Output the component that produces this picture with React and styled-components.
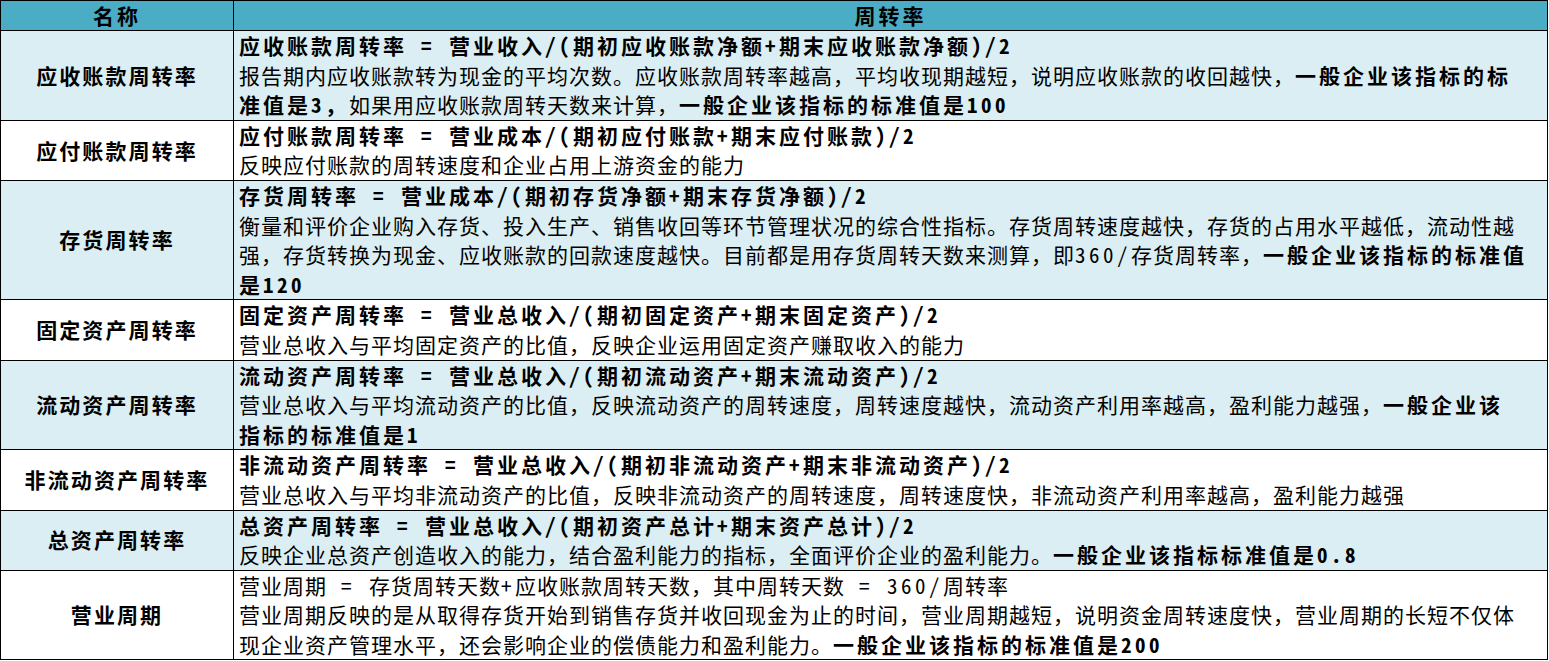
import React from 'react';
import styled, { createGlobalStyle } from 'styled-components';

const GlobalStyle = createGlobalStyle`
  html, body { margin: 0; padding: 0; background: #ffffff; }
  body { font-family: "Noto Sans CJK SC", "Noto Sans", sans-serif; color: #000; }
`;

const Table = styled.table`
  width: 1548px;
  border-collapse: collapse;
  table-layout: fixed;
  font-family: "Noto Sans CJK SC", sans-serif;
  font-size: 21px;
  color: #000;
`;

const HeadCell = styled.th`
  background: #4bacc6;
  border: 1px solid #000;
  height: 29px;
  padding: 0;
  line-height: 29px;
  font-weight: 700;
  letter-spacing: 3px;
  text-align: center;
  width: ${(p) => p.$width || 'auto'};
`;

const Row = styled.tr`
  background: ${(p) => (p.$tint ? '#daeef3' : '#ffffff')};
`;

const NameCell = styled.td`
  border: 1px solid #000;
  padding: 0;
  text-align: center;
  vertical-align: middle;
  font-weight: 700;
  letter-spacing: 2.1px;
  line-height: 29.6px;
`;

const BodyCell = styled.td`
  border: 1px solid #000;
  padding: 0 5px;
  vertical-align: middle;
`;

const Line = styled.div`
  white-space: nowrap;
  overflow: hidden;
  line-height: 29.6px;
  height: 29.6px;
`;

const Seg = styled.span`
  font-weight: ${(p) => (p.$bold ? 700 : 400)};
  letter-spacing: ${(p) => (p.$bold ? '3px' : '1px')};
`;

const Latin = styled.span`
  font-family: "Noto Sans Mono CJK SC", "Noto Sans CJK SC", sans-serif;
  letter-spacing: 3.5px;
`;

const rows = [
  {
    name: '应收账款周转率',
    tint: true,
    lines: [
      [['应收账款周转率 = 营业收入/(期初应收账款净额+期末应收账款净额)/2', true]],
      [
        ['报告期内应收账款转为现金的平均次数。应收账款周转率越高，平均收现期越短，说明应收账款的收回越快，', false],
        ['一般企业该指标的标', true],
      ],
      [
        ['准值是3，', true],
        ['如果用应收账款周转天数来计算，', false],
        ['一般企业该指标的标准值是100', true],
      ],
    ],
  },
  {
    name: '应付账款周转率',
    tint: false,
    lines: [
      [['应付账款周转率 = 营业成本/(期初应付账款+期末应付账款)/2', true]],
      [['反映应付账款的周转速度和企业占用上游资金的能力', false]],
    ],
  },
  {
    name: '存货周转率',
    tint: true,
    lines: [
      [['存货周转率 = 营业成本/(期初存货净额+期末存货净额)/2', true]],
      [['衡量和评价企业购入存货、投入生产、销售收回等环节管理状况的综合性指标。存货周转速度越快，存货的占用水平越低，流动性越', false]],
      [
        ['强，存货转换为现金、应收账款的回款速度越快。目前都是用存货周转天数来测算，即360/存货周转率，', false],
        ['一般企业该指标的标准值', true],
      ],
      [['是120', true]],
    ],
  },
  {
    name: '固定资产周转率',
    tint: false,
    lines: [
      [['固定资产周转率 = 营业总收入/(期初固定资产+期末固定资产)/2', true]],
      [['营业总收入与平均固定资产的比值，反映企业运用固定资产赚取收入的能力', false]],
    ],
  },
  {
    name: '流动资产周转率',
    tint: true,
    lines: [
      [['流动资产周转率 = 营业总收入/(期初流动资产+期末流动资产)/2', true]],
      [
        ['营业总收入与平均流动资产的比值，反映流动资产的周转速度，周转速度越快，流动资产利用率越高，盈利能力越强，', false],
        ['一般企业该', true],
      ],
      [['指标的标准值是1', true]],
    ],
  },
  {
    name: '非流动资产周转率',
    tint: false,
    lines: [
      [['非流动资产周转率 = 营业总收入/(期初非流动资产+期末非流动资产)/2', true]],
      [['营业总收入与平均非流动资产的比值，反映非流动资产的周转速度，周转速度快，非流动资产利用率越高，盈利能力越强', false]],
    ],
  },
  {
    name: '总资产周转率',
    tint: true,
    lines: [
      [['总资产周转率 = 营业总收入/(期初资产总计+期末资产总计)/2', true]],
      [
        ['反映企业总资产创造收入的能力，结合盈利能力的指标，全面评价企业的盈利能力。', false],
        ['一般企业该指标标准值是0.8', true],
      ],
    ],
  },
  {
    name: '营业周期',
    tint: false,
    lines: [
      [['营业周期 = 存货周转天数+应收账款周转天数，其中周转天数 = 360/周转率', false]],
      [['营业周期反映的是从取得存货开始到销售存货并收回现金为止的时间，营业周期越短，说明资金周转速度快，营业周期的长短不仅体', false]],
      [
        ['现企业资产管理水平，还会影响企业的偿债能力和盈利能力。', false],
        ['一般企业该指标的标准值是200', true],
      ],
    ],
  },
];

function renderText(text) {
  const parts = text.split(/([\x20-\x7e]+)/);
  return parts.map((part, i) =>
    i % 2 === 1 ? <Latin key={i}>{part}</Latin> : part
  );
}

export default function App() {
  return (
    <>
      <GlobalStyle />
      <Table>
        <thead>
          <tr>
            <HeadCell $width="232px">名称</HeadCell>
            <HeadCell>周转率</HeadCell>
          </tr>
        </thead>
        <tbody>
          {rows.map((row) => (
            <Row key={row.name} $tint={row.tint}>
              <NameCell>{row.name}</NameCell>
              <BodyCell>
                {row.lines.map((segs, li) => (
                  <Line key={li}>
                    {segs.map(([text, bold], si) => (
                      <Seg key={si} $bold={bold}>
                        {renderText(text)}
                      </Seg>
                    ))}
                  </Line>
                ))}
              </BodyCell>
            </Row>
          ))}
        </tbody>
      </Table>
    </>
  );
}
